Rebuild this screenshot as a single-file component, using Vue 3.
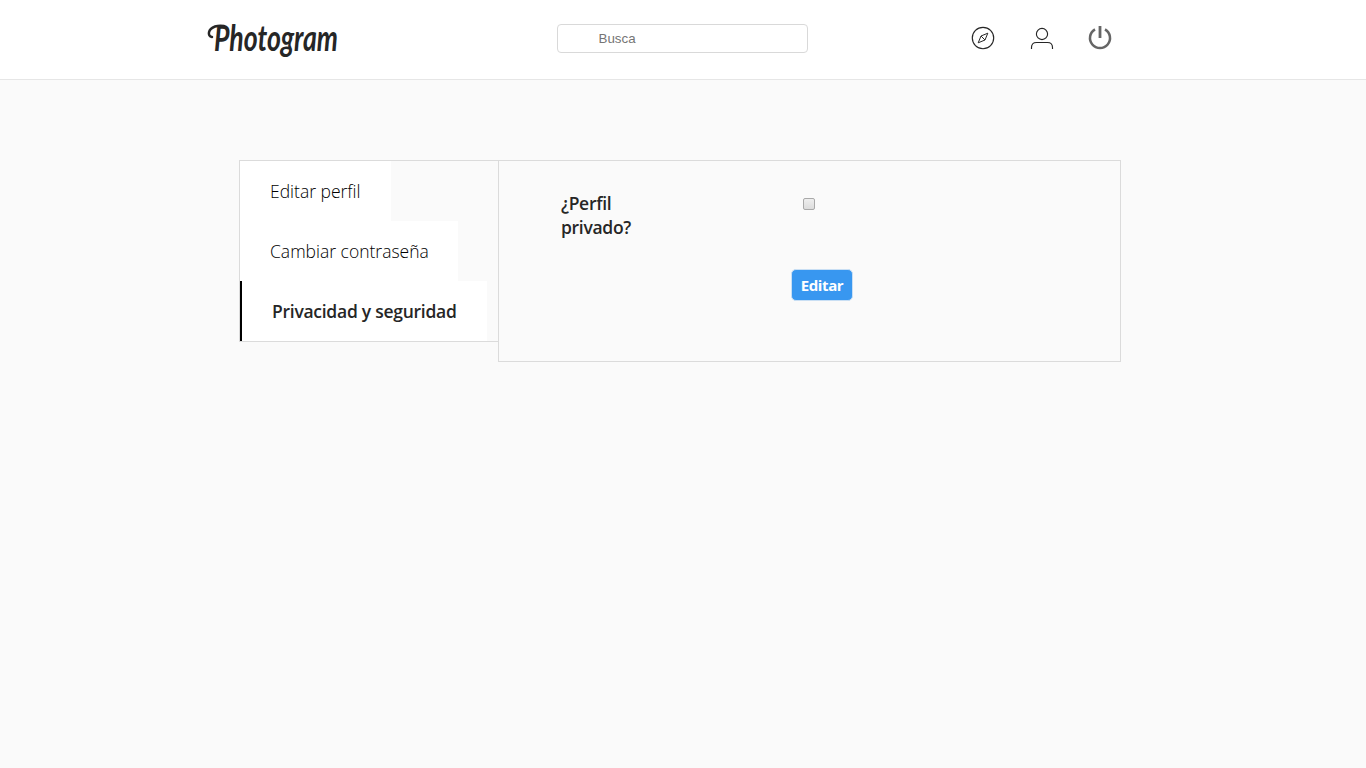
<script setup>
const sections = [
  { name: 'Editar perfil', key: 'profile' },
  { name: 'Cambiar contraseña', key: 'password' },
  { name: 'Privacidad y seguridad', key: 'privacy' },
]
</script>

<template>
  <div class="page">
    <header class="header">
      <a class="brand">
        <svg width="134" height="48" viewBox="0 0 134 48">
          <text x="7" y="32" textLength="124" lengthAdjust="spacingAndGlyphs">Photogram</text>
          <path d="M5 18C0 17 1 10 8 7.5C11 6.5 14 6.5 17 7" />
        </svg>
      </a>
      <input class="search" type="text" placeholder="Busca" />
      <nav class="icons">
        <svg width="24" height="24" viewBox="0 0 24 24" fill="none" stroke="#262626">
          <circle cx="12" cy="12" r="10.7" stroke-width="1.15" />
          <path d="M16.8 7.2L14 14L7.2 16.8L10 10Z M10 10L14 14" stroke-width="1" />
        </svg>
        <svg width="24" height="24" viewBox="0 0 24 24" fill="none" stroke="#262626" stroke-width="1.15">
          <circle cx="12" cy="8" r="5.6" />
          <path d="M1.5 23V21.5Q1.5 16.5 6.5 16.5H17.5Q22.5 16.5 22.5 21.5V23" />
        </svg>
        <svg class="power" width="24" height="24" viewBox="0 0 24 24" fill="none" stroke="#666" stroke-width="2.5">
          <path d="M7 3.4A10 10 0 1 0 17 3.4" />
          <path d="M12 0V12" stroke-width="2.8" />
        </svg>
      </nav>
    </header>
    <main class="settings">
      <ul class="menu">
        <li v-for="s in sections" :key="s.key" :class="s.key">{{ s.name }}</li>
      </ul>
      <form class="panel" @submit.prevent>
        <label for="private">¿Perfil<br />privado?</label>
        <div class="controls">
          <input id="private" class="check" type="checkbox" />
          <button class="save">Editar</button>
        </div>
      </form>
    </main>
  </div>
</template>

<style>
body { background: #fafafa; overflow: hidden; }
</style>

<style scoped>
* { box-sizing: border-box; }
.page { height: 768px; background: #fafafa; color: #262626; font-family: "Open Sans", "Noto Sans", sans-serif; }
.header { height: 80px; background: #fff; border-bottom: 1px solid #e6e6e6; display: flex; align-items: flex-start; }
.brand { width: 134px; height: 48px; margin: 19px 0 0 207px; }
.brand svg { display: block; overflow: visible; }
.brand text { font: italic 700 36px "Lato", sans-serif; fill: #262626; }
.brand path { fill: none; stroke: #262626; stroke-width: 2.5; stroke-linecap: round; }
.search { width: 251px; height: 29px; margin: 24px 0 0 216px; padding: 0 0 0 40.5px; border: 1px solid #d9d9d9; border-radius: 4px; background: #fff; font: 13.33px "Liberation Sans", sans-serif; outline: none; }
.search::placeholder { color: #757575; opacity: 1; }
.icons { display: flex; gap: 35px; margin: 26px 0 0 163px; }
.power { margin-left: -1px; }
.settings { display: flex; align-items: flex-start; margin: 80px 0 0 239px; }
.menu { width: 259px; height: 182px; margin: 0; padding: 0; border: 1px solid #dbdbdb; border-right: 0; list-style: none; display: flex; flex-direction: column; align-items: flex-start; }
.menu li { height: 60px; padding-left: 30px; background: #fff; color: #000; font-size: 17.5px; font-weight: 300; line-height: 60px; white-space: nowrap; }
.profile { width: 151px; }
.password { width: 218px; }
.menu .privacy { width: 247px; border-left: 2px solid #000; color: #262626; font-weight: 600; letter-spacing: -.27px; }
.panel { width: 623px; height: 202px; border: 1px solid #dbdbdb; padding: 31px 0 0 62px; display: flex; align-items: flex-start; }
label { width: 230px; margin-top: -1px; font-size: 17.5px; font-weight: 600; line-height: 24px; letter-spacing: -.3px; }
.controls { display: flex; flex-direction: column; align-items: flex-start; }
.check { appearance: none; width: 12px; height: 12px; margin: 6px 0 59px 12px; border: 1px solid #a9a9a9; border-radius: 2px; background: linear-gradient(#eee, #dcdcdc); }
.save { width: 62px; height: 32px; padding: 0; border: 1px solid #c9dff4; border-radius: 5px; background: #3897f0; color: #fff; font: 700 15px "Open Sans", sans-serif; letter-spacing: -.4px; }
</style>
